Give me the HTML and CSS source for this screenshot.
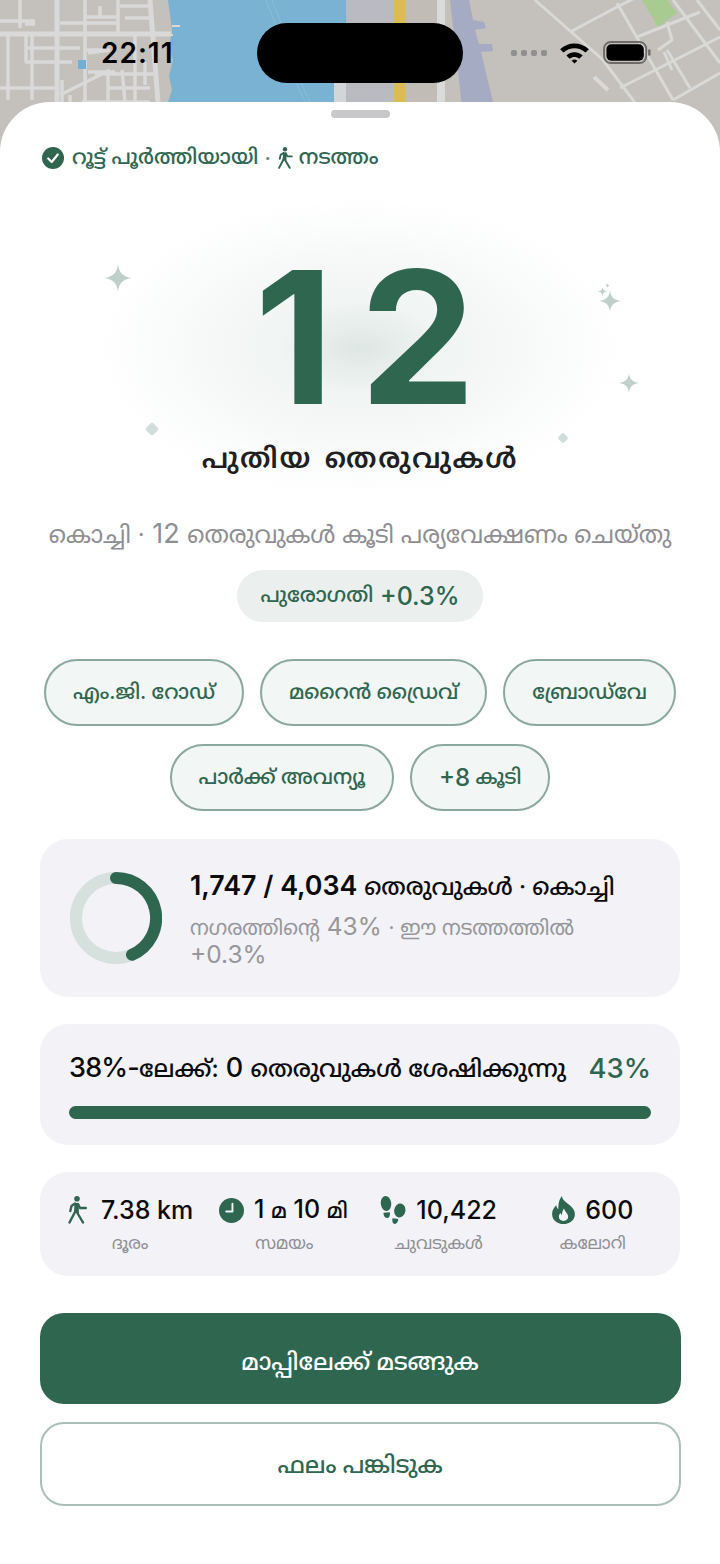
FILE: index.html
```html
<!DOCTYPE html>
<html lang="ml">
<head>
<meta charset="utf-8">
<title>റൂട്ട് പൂർത്തിയായി</title>
<link rel="stylesheet" href="styles.css">
</head>
<body>
<div class="screen">
  <header class="top">
    <svg class="map" viewBox="0 0 720 160" aria-hidden="true">
      <defs><filter id="soft"><feGaussianBlur stdDeviation="0.5"/></filter></defs>
      <g filter="url(#soft)">
        <rect width="720" height="160" fill="#c4c0bb"/>
        <g fill="none" stroke="#d9d9d9">
          <path stroke-width="5" d="M0 34H172M57 0V102M150 0L158 102"/>
          <path stroke-width="3.500" d="M20 0V28M0 21H35M25 24H35M60 23H118M85 0V102M118 0V34M120 6H150M100 6V18M85 17H118M125 18H150M25 48H80M26 36V62M32 36V100M25 62H70M85 50H110L88 53M8 36V100M0 88H55M58 62H72M88 72H115L95 75M135 36L135 102M62 80V102M105 74H158M108 75V102M122 70L125 102M145 62V85M60 95L110 70M82 102H150M108 88H150M70 102L70 95"/>
        </g>
        <rect x="78" y="60" width="8" height="9" fill="#6fb0d6"/>
        <path d="M168 0H346V102H168L172 90L169 76L173 60L169 48L172 30L168 0Z" fill="#79b2d2"/>
        <path d="M172 26H180M170 35H173" stroke="#d9d9d9" stroke-width="2"/>
        <path d="M266 0L282 40M272 0L288 40M290 70L305 102M295 70L310 102" stroke="#8fbdd3" stroke-width="1" fill="none"/>
        <rect x="334" y="80" width="13" height="80" fill="#d3d6d9"/>
        <rect x="346" width="48" height="160" fill="#babbc1"/>
        <rect x="394" width="11" height="160" fill="#dcba57"/>
        <rect x="405" width="32" height="160" fill="#c1bdb6"/>
        <rect x="437" width="8" height="160" fill="#dadad8"/>
        <path d="M450 0H469L473 20L484 22L486 28L475 30L479 44L492 44L493 51L481 52L493 102V160H468Z" fill="#a5abc3"/>
        <path d="M642 0H667L677 13L658 27Z" fill="#a8cb92"/>
        <g fill="none" stroke="#d9d9d7" stroke-width="3">
          <path d="M535 0L603 60L633 100L650 125M570 32L617 7L637 -3M617 3L673 100M637 37L700 12M620 88L720 37M673 0L720 63M697 0L720 30M667 50L690 88M673 100L720 73M667 22L672 40L658 50M664 52L672 70"/>
          <path stroke-width="4" d="M594 77L608 90"/>
        </g>
      </g>
    </svg>
    <div class="status">
      <span class="time">22:11</span>
      <span class="island"></span>
      <div class="status-right">
        <span class="dots"><i></i><i></i><i></i><i></i></span>
        <svg class="wifi" viewBox="0 0 32 24" aria-hidden="true"><path d="M1 8.500C9.500 .5 22.500 .5 31 8.500L27.500 12C21 6 11 6 4.500 12Z"/><path d="M7.500 15C12.500 10.500 19.500 10.500 24.500 15L21 18.500C18 16 14 16 11 18.500Z"/><path d="M13 20.500C15 19 17 19 19 20.500L16 23.500Z"/></svg>
        <svg class="battery" viewBox="0 0 52 24" aria-hidden="true"><rect x="1" y="1" width="44" height="22" rx="7" fill="none" stroke="#6e6c6a" stroke-width="2"/><rect x="3.500" y="3.500" width="39" height="17" rx="5" fill="#000"/><rect x="47" y="8.500" width="2.500" height="7" rx="1.200" fill="#6e6c6a"/></svg>
      </div>
    </div>
  </header>

  <main class="sheet">
    <div class="grabber"></div>
    <div class="done">
      <svg class="done-check" viewBox="0 0 22 22" aria-hidden="true"><circle cx="11" cy="11" r="11" fill="#2e6650"/><path d="M6.200 11.500L9.700 15L15.800 7.500" fill="none" stroke="#fff" stroke-width="2.200" stroke-linecap="round" stroke-linejoin="round"/></svg>
      <span>റൂട്ട് പൂർത്തിയായി</span>
      <span class="done-dot">·</span>
      <svg class="done-walk" viewBox="0 0 20 28" aria-hidden="true"><use href="#walker"/></svg>
      <span>നടത്തം</span>
    </div>

    <section class="hero">
      <svg class="spark s1" viewBox="0 0 24 24" aria-hidden="true"><use href="#star"/></svg>
      <svg class="spark s2" viewBox="0 0 24 24" aria-hidden="true"><use href="#star"/></svg>
      <svg class="spark s3" viewBox="0 0 24 24" aria-hidden="true"><use href="#star"/></svg>
      <svg class="spark s4" viewBox="0 0 24 24" aria-hidden="true"><use href="#star"/></svg>
      <svg class="spark s5" viewBox="0 0 24 24" aria-hidden="true"><use href="#star"/></svg>
      <span class="diamond d1"></span>
      <span class="diamond d2"></span>
      <div class="count">12</div>
      <div class="count-label">പുതിയ തെരുവുകൾ</div>
    </section>

    <p class="summary"><span class="ml">കൊച്ചി ·</span> 12 <span class="ml">തെരുവുകൾ കൂടി പര്യവേക്ഷണം ചെയ്തു</span></p>
    <div class="progress-pill"><span class="ml">പുരോഗതി</span>&nbsp;+0.3%</div>

    <div class="chips">
      <span class="chip">എം.ജി. റോഡ്</span>
      <span class="chip">മറൈൻ ഡ്രൈവ്</span>
      <span class="chip">ബ്രോഡ്‌വേ</span>
      <span class="chip">പാർക്ക് അവന്യൂ</span>
      <span class="chip"><span class="chip-num">+8</span>&nbsp;കൂടി</span>
    </div>

    <section class="card city">
      <svg class="ring" viewBox="0 0 92 92" aria-hidden="true">
        <circle cx="46" cy="46" r="40" fill="none" stroke="#d6e0dd" stroke-width="12"/>
        <path d="M46 6A40 40 0 0 1 62 82.700" fill="none" stroke="#2e6650" stroke-width="12" stroke-linecap="round"/>
      </svg>
      <div class="city-text">
        <div class="city-title">1,747 / 4,034 <span class="ml">തെരുവുകൾ · കൊച്ചി</span></div>
        <div class="city-sub"><span class="ml">നഗരത്തിന്റെ</span> 43% <span class="ml">· ഈ നടത്തത്തിൽ</span> +0.3%</div>
      </div>
    </section>

    <section class="card goal">
      <div class="goal-row">
        <span class="goal-title"><span class="goal-num">38%-</span><span class="ml">ലേക്ക്:</span> 0 <span class="ml">തെരുവുകൾ ശേഷിക്കുന്നു</span></span>
        <span class="goal-pct">43%</span>
      </div>
      <div class="bar"></div>
    </section>

    <section class="card stats">
      <div class="stat">
        <div class="stat-top"><svg class="stat-icon walk" viewBox="0 0 20 28" aria-hidden="true"><use href="#walker"/></svg><b>7.38 km</b></div>
        <div class="stat-label">ദൂരം</div>
      </div>
      <div class="stat">
        <div class="stat-top"><svg class="stat-icon clock" viewBox="0 0 26 26" aria-hidden="true"><circle cx="13" cy="13" r="13" fill="#2e6650"/><path d="M14 6V14H7.500" fill="none" stroke="#f2f2f7" stroke-width="2" stroke-linecap="round" stroke-linejoin="round"/></svg><b>1 <span class="unit">മ</span> 10 <span class="unit">മി</span></b></div>
        <div class="stat-label">സമയം</div>
      </div>
      <div class="stat">
        <div class="stat-top"><svg class="stat-icon feet" viewBox="0 0 26 28" aria-hidden="true"><g fill="#2e6650"><ellipse cx="6" cy="7.500" rx="5.200" ry="7.500" transform="rotate(-6 6 7.500)"/><path d="M3.500 16.800L9.800 16.200C10.300 19 9.500 22 7 22C4.500 22 3.500 19.500 3.500 16.800Z"/><ellipse cx="19.800" cy="14.500" rx="5.600" ry="7" transform="rotate(10 19.800 14.500)"/><path d="M12.500 22.300L18.300 23C18 26 16.500 28.200 14.500 27.900C12.500 27.600 12 25 12.500 22.300Z"/></g></svg><b>10,422</b></div>
        <div class="stat-label">ചുവടുകൾ</div>
      </div>
      <div class="stat">
        <div class="stat-top"><svg class="stat-icon flame" viewBox="0 0 22 27" aria-hidden="true"><path d="M9.500 0C10 4 13 5.500 16.500 8.500C20 11.500 22 14 22 17.500C22 23 17 27 11 27C5 27 0 23 0 17.500C0 13.500 2 11 4 9C4.500 11 5 12 6 13C6 8 6.500 3.500 9.500 0Z" fill="#2e6650"/><path d="M11.500 12C12 15 15.500 16.500 15.500 20C15.500 22.500 13.500 24 11 24C8.500 24 6.500 22.500 6.500 20C6.500 18.500 7.300 17.500 8.200 16.500C8.500 17.500 9 18 9.500 18.500C9.500 16 10 14 11.500 12Z" fill="#f2f2f7"/></svg><b>600</b></div>
        <div class="stat-label">കലോറി</div>
      </div>
    </section>

    <button class="btn primary" type="button">മാപ്പിലേക്ക് മടങ്ങുക</button>
    <button class="btn secondary" type="button">ഫലം പങ്കിടുക</button>
  </main>
</div>

<svg class="defs" aria-hidden="true">
  <defs>
    <symbol id="walker" viewBox="0 0 20 28">
      <circle cx="10" cy="2.800" r="2.800" fill="#2e6650"/>
      <path d="M7.500 7H11.500L12 17H7Z" fill="#2e6650"/>
      <g fill="none" stroke="#2e6650" stroke-width="2.400" stroke-linecap="round" stroke-linejoin="round">
        <path d="M8.500 15L2.500 26.500M9.500 15.500L16 26.500"/>
        <path d="M8 7.500L4.500 10L3.300 15M11 8L13 12H18.800"/>
      </g>
    </symbol>
    <symbol id="star" viewBox="0 0 24 24">
      <path d="M12 0C12.800 7.500 16 11 24 12C16 13 12.800 16.500 12 24C11.200 16.500 8 13 0 12C8 11 11.200 7.500 12 0Z"/>
    </symbol>
  </defs>
</svg>
</body>
</html>
```

FILE: styles.css
```css
* { box-sizing: border-box; }
html, body { margin: 0; padding: 0; background: #fff; }
body { font-family: Inter, "Noto Sans Malayalam", "Noto Sans", "DejaVu Sans", sans-serif; }
.screen { width: 720px; height: 1564px; overflow: hidden; display: flex; flex-direction: column; position: relative; }
.top { height: 102px; flex: none; position: relative; padding-top: 22px; }
.map { position: absolute; left: 0; top: 0; width: 720px; height: 160px; z-index: 0; }
.status { position: relative; z-index: 1; display: flex; align-items: center; height: 61px; padding: 0 67px 0 101px; }
.time { font-size: 28px; font-weight: 600; width: 156px; letter-spacing: 1px; color: #000; }
.island { width: 206px; height: 60px; background: #000; border-radius: 30px; flex: none; }
.status-right { margin-left: auto; display: flex; align-items: center; margin-top: -1px; }
.dots { display: flex; gap: 4px; margin-right: 12px; margin-top: 2px; }
.dots i { width: 6px; height: 6px; background: #908f8f; border-radius: 2px; }
.wifi { width: 31px; height: 23px; fill: #000; margin-right: 13px; }
.battery { width: 50px; height: 23px; }

.ml { font-size: .87em; }

.sheet { position: relative; z-index: 2; flex: 1; background: #fff; border-radius: 50px 50px 0 0; padding: 8px 40px 0; display: flex; flex-direction: column; align-items: center; }
.grabber { width: 59px; height: 8px; border-radius: 4px; background: #c8c8ca; flex: none; }
.done { align-self: flex-start; display: flex; align-items: center; margin-top: 24px; font-size: 21px; font-weight: 500; color: #2e6650; height: 32px; margin-left: 2px; }
.done-check { width: 22px; height: 22px; margin-right: 8px; }
.done-dot { margin: 0 6px; color: #5f8878; }
.done-walk { width: 16px; height: 22px; margin-right: 6px; }

.hero { position: relative; width: 640px; height: 314px; flex: none; display: flex; flex-direction: column; align-items: center; background: radial-gradient(ellipse 262px 150px at 50% 174px, rgba(46,102,80,.16), rgba(46,102,80,.07) 30%, rgba(46,102,80,.04) 62%, rgba(46,102,80,0) 100%); }
.count { font-size: 184px; font-weight: 700; line-height: 184px; color: #2e6650; margin-top: 71px; letter-spacing: 26px; padding-left: 36px; }
.count-label { font-size: 28px; font-weight: 600; color: #1f1f22; letter-spacing: 1.700px; word-spacing: 4px; line-height: 36px; margin-top: 11px; }
.spark { position: absolute; fill: #bfd0ca; }
.s1 { left: 64px; top: 90px; width: 28px; height: 28px; }
.s2 { left: 559px; top: 116px; width: 22px; height: 22px; }
.s3 { left: 558px; top: 113px; width: 9px; height: 9px; }
.s4 { left: 565px; top: 109px; width: 5px; height: 5px; }
.s5 { left: 579px; top: 199px; width: 20px; height: 20px; }
.diamond { position: absolute; background: #d2dedb; transform: rotate(45deg); border-radius: 2px; }
.d1 { left: 107px; top: 250px; width: 10px; height: 10px; }
.d2 { left: 519px; top: 260px; width: 8px; height: 8px; }

.summary { margin: 28px 0 0; font-size: 27px; line-height: 36px; color: #8e8e93; white-space: nowrap; }
.summary .ml { font-size: .89em; }
.progress-pill { margin-top: 17px; height: 52px; padding: 0 23px; border-radius: 26px; background: #ebf0ee; color: #2e6650; font-size: 25px; font-weight: 500; display: flex; align-items: center; }
.progress-pill .ml { font-size: .84em; }
.chips { margin-top: 37px; display: flex; flex-wrap: wrap; justify-content: center; gap: 18px 16px; width: 640px; }
.chip { height: 67px; padding: 0 27px; border: 2px solid #8aa89d; border-radius: 34px; background: #f2f6f4; color: #2e6650; font-size: 20.500px; font-weight: 500; display: flex; align-items: center; }
.chip-num { font-size: 24px; }

.card { background: #f2f2f7; border-radius: 28px; width: 640px; flex: none; }
.city { margin-top: 28px; height: 158px; display: flex; align-items: flex-start; padding: 33px 30px 0; }
.ring { width: 92px; height: 92px; flex: none; margin-right: 28px; }
.city-text { min-width: 0; margin-top: -5px; }
.city-title { font-size: 26.800px; line-height: 36px; font-weight: 600; color: #0b0b0d; white-space: nowrap; }
.city-title .ml { font-weight: 500; }
.city-sub { font-size: 24.500px; line-height: 27px; color: #96969b; margin-top: 8px; width: 420px; }
.city-sub .ml { font-size: .84em; }
.goal { margin-top: 27px; height: 121px; padding: 24px 29px 0; }
.goal-row { display: flex; align-items: center; justify-content: space-between; height: 40px; }
.goal-title { font-size: 27px; font-weight: 500; color: #0b0b0d; white-space: nowrap; }
.goal-title .ml { font-size: .88em; }
.goal-num { letter-spacing: -.8px; }
.goal-pct { font-size: 27.500px; font-weight: 500; color: #2e6650; }
.bar { height: 13px; border-radius: 7px; background: #2e6650; margin-top: 18px; }
.stats { margin-top: 27px; height: 104px; display: grid; grid-template-columns: repeat(4, 1fr); padding: 19px 10px 0 13px; }
.stat { display: flex; flex-direction: column; align-items: center; }
.stat-top { display: flex; align-items: center; height: 38px; gap: 10px; font-size: 25px; white-space: nowrap; color: #0b0b0d; }
.stat-top b { font-weight: 500; }
.stat-icon { width: 20px; height: 28px; flex: none; }
.walk { margin-right: 4px; }
.clock { width: 25px; height: 25px; margin-left: -2px; }
.feet { width: 26px; height: 28px; }
.flame { width: 23px; height: 28px; }
.unit { font-size: .85em; }
.stat-label { font-size: 17px; line-height: 24px; color: #8e8e93; margin-top: 2px; }

.btn { width: 641px; flex: none; border-radius: 24px; font-family: inherit; font-size: 23.500px; font-weight: 500; display: block; }
.primary { margin-top: 37px; height: 91px; padding: 8px 0 0; background: #2e6650; color: #fff; border: 0; }
.secondary { margin-top: 18px; height: 84px; padding: 4px 0 0; background: #fff; color: #2e6650; border: 2px solid #a9bfb8; }
.defs { position: absolute; width: 0; height: 0; }
```
